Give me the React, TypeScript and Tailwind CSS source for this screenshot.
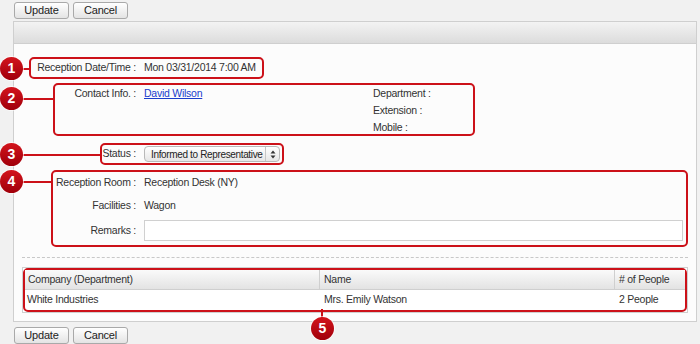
// Reception detail screen with numbered callouts

import React from 'react';

const Btn: React.FC<{ label: string }> = ({ label }) => (
  <button className="h-[17px] w-[55px] rounded-[3px] border border-[#a9a9a9] bg-gradient-to-b from-[#ffffff] to-[#e4e4e4] text-[11px] leading-none tracking-[-0.2px] text-[#222]">
    {label}
  </button>
);

// label column, right-aligned, overflows to the left if needed
const Label: React.FC<{ w: string; text: string }> = ({ w, text }) => (
  <div className={`flex shrink-0 justify-end whitespace-nowrap text-[#333] ${w}`}>
    <span>{text}</span>
  </div>
);

const Callout: React.FC<{ n: number; className: string }> = ({ n, className }) => (
  <div
    className={`absolute flex h-[23px] w-[23px] items-center justify-center rounded-full bg-gradient-to-b from-[#d3141c] to-[#a0000a] text-[14px] font-bold tracking-normal text-white shadow-[0_0_0_1px_rgba(255,255,255,0.6)] ${className}`}
  >
    {n}
  </div>
);

export default function App() {
  return (
    <div className="relative h-[344px] w-[700px] overflow-hidden bg-[#f1f1f1] text-[10.5px] tracking-[-0.25px] text-[#333] [font-family:'Liberation_Sans',Arial,sans-serif]">
      {/* top buttons */}
      <div className="flex gap-[4px] pl-[14px] pt-[2px]">
        <Btn label="Update" />
        <Btn label="Cancel" />
      </div>

      {/* panel */}
      <div className="ml-[13px] mt-[2px] w-[684px] border border-[#cfcfcf] bg-[#fcfcfc]">
        <div className="h-[22px] border-b border-[#cfcfcf] bg-gradient-to-b from-[#f3f3f3] to-[#dcdcdc]" />

        <div className="flex flex-col pb-[8px]">
          {/* 1 */}
          <div className="ml-[15px] mt-[13px] flex h-[22px] w-[235px] items-center rounded-[5px] border-2 border-[#cc1119]">
            <Label w="w-[105px]" text="Reception Date/Time :" />
            <div className="ml-[8px] whitespace-nowrap">Mon 03/31/2014 7:00 AM</div>
          </div>

          {/* 2 */}
          <div className="ml-[39px] mt-[4px] grid h-[53px] w-[422px] grid-cols-[318px_1fr] grid-rows-[17px_17px_17px] rounded-[5px] border-2 border-[#cc1119]">
            <div className="flex items-center">
              <Label w="w-[81px]" text="Contact Info. :" />
              <a href="#" className="ml-[8px] text-[#1a3ccc] underline">David Wilson</a>
            </div>
            <div className="flex items-center whitespace-nowrap">Department :</div>
            <div />
            <div className="flex items-center whitespace-nowrap">Extension :</div>
            <div />
            <div className="flex items-center whitespace-nowrap">Mobile :</div>
          </div>

          {/* 3 */}
          <div className="ml-[86px] mt-[7px] flex h-[22px] w-[184px] items-center rounded-[5px] border-2 border-[#cc1119]">
            <Label w="w-[34px]" text="Status :" />
            <div className="ml-[8px] flex h-[16px] w-[136px] items-center rounded-[4px] border border-[#b9b9b9] bg-gradient-to-b from-[#ffffff] to-[#e6e6e6] text-[#222]">
              <span className="flex-1 whitespace-nowrap pl-[6px] text-[10px] tracking-[-0.35px]">Informed to Representative</span>
              <span className="flex h-full w-[14px] shrink-0 flex-col items-center justify-center border-l border-[#c6c6c6]">
                <svg width="6" height="9" viewBox="0 0 6 9">
                  <path d="M3 0.5 L5.5 3.5 L0.5 3.5 Z" fill="#333" />
                  <path d="M3 8.5 L5.5 5.5 L0.5 5.5 Z" fill="#333" />
                </svg>
              </span>
            </div>
          </div>

          {/* 4 */}
          <div className="ml-[37px] mt-[5px] flex h-[77px] w-[637px] flex-col rounded-[5px] border-2 border-[#cc1119] pt-[1px]">
            <div className="flex h-[20px] items-center">
              <Label w="w-[83px]" text="Reception Room :" />
              <div className="ml-[8px]">Reception Desk (NY)</div>
            </div>
            <div className="mt-[3px] flex h-[20px] items-center">
              <Label w="w-[83px]" text="Facilities :" />
              <div className="ml-[8px]">Wagon</div>
            </div>
            <div className="mt-[2px] flex h-[25px] items-center">
              <Label w="w-[83px]" text="Remarks :" />
              <div className="ml-[8px] h-[21px] w-[539px] border border-[#d0d0d0] bg-white" />
            </div>
          </div>

          {/* divider */}
          <div className="ml-[8px] mt-[10px] w-[666px] border-t border-dashed border-[#c8c8c8]" />

          {/* 5 */}
          <div className="ml-[8px] mt-[9px] w-[666px] border border-[#cfcfcf] bg-white">
            <div className="grid grid-cols-[295px_295px_1fr] rounded-[5px] border-2 border-[#cc1119]">
              <div className="flex h-[20px] items-center border-r border-b border-[#cfcfcf] bg-gradient-to-b from-[#fafafa] to-[#e3e3e3] pl-[3px]">Company (Department)</div>
              <div className="flex h-[20px] items-center border-r border-b border-[#cfcfcf] bg-gradient-to-b from-[#fafafa] to-[#e3e3e3] pl-[4px]">Name</div>
              <div className="flex h-[20px] items-center border-b border-[#cfcfcf] bg-gradient-to-b from-[#fafafa] to-[#e3e3e3] pl-[4px]">
                # of People
              </div>
              <div className="flex h-[20px] items-center pl-[2px]">White Industries</div>
              <div className="flex h-[20px] items-center pl-[4px]">Mrs. Emily Watson</div>
              <div className="flex h-[20px] items-center pl-[4px]">2 People</div>
            </div>
          </div>
        </div>
      </div>

      {/* bottom buttons */}
      <div className="mt-[5px] flex gap-[4px] pl-[14px]">
        <Btn label="Update" />
        <Btn label="Cancel" />
      </div>

      {/* callout leader lines */}
      <div className="absolute left-[22px] top-[68px] h-[2px] w-[8px] bg-[#cc1119]" />
      <div className="absolute left-[22px] top-[98px] h-[2px] w-[32px] bg-[#cc1119]" />
      <div className="absolute left-[22px] top-[154px] h-[2px] w-[79px] bg-[#cc1119]" />
      <div className="absolute left-[22px] top-[181px] h-[2px] w-[30px] bg-[#cc1119]" />
      <div className="absolute left-[321px] top-[309px] h-[9px] w-[2px] bg-[#cc1119]" />

      <Callout n={1} className="left-[0px] top-[57px]" />
      <Callout n={2} className="left-[0px] top-[87px]" />
      <Callout n={3} className="left-[0px] top-[143px]" />
      <Callout n={4} className="left-[0px] top-[170px]" />
      <Callout n={5} className="left-[311px] top-[317px]" />
    </div>
  );
}
